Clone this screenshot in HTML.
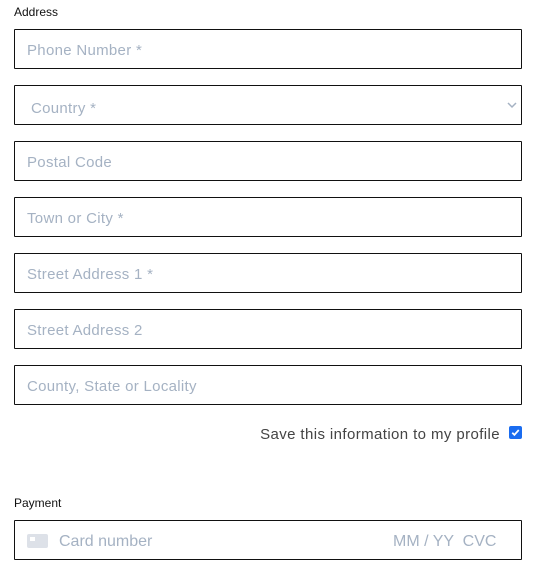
<!DOCTYPE html>
<html><head><style>
body{margin:0;background:#fff;font-family:"Liberation Sans",sans-serif;width:539px;height:567px;position:relative;overflow:hidden}
.l{position:absolute;left:14px;font-size:12px;color:#111}
.b{position:absolute;left:14px;width:506px;height:38px;border:1px solid #111;border-radius:1px;box-sizing:content-box}
.p{position:absolute;left:12px;top:12px;font-size:15px;color:#a5b2c3;letter-spacing:0.3px}
</style></head><body>
<div class="l" style="top:5px">Address</div>
<div class="b" style="top:29px"><span class="p">Phone Number *</span></div>
<div class="b" style="top:85px"><span class="p" style="left:16px;top:14px">Country *</span>
<svg style="position:absolute;right:4px;top:15px" width="10" height="8" viewBox="0 0 10 8"><path d="M1 2l4 4 4-4" fill="none" stroke="#a5b2c3" stroke-width="1.5"/></svg></div>
<div class="b" style="top:141px"><span class="p">Postal Code</span></div>
<div class="b" style="top:197px"><span class="p">Town or City *</span></div>
<div class="b" style="top:253px"><span class="p">Street Address 1 *</span></div>
<div class="b" style="top:309px"><span class="p">Street Address 2</span></div>
<div class="b" style="top:365px"><span class="p">County, State or Locality</span></div>
<div style="position:absolute;right:39px;top:426px;font-size:15px;color:#444;letter-spacing:0.4px">Save this information to my profile</div>
<div style="position:absolute;left:509px;top:426px;width:13px;height:13px;background:#1a6cf0;border-radius:2px"><svg width="13" height="13" viewBox="0 0 12 12"><path d="M3 6.2l2 2 4-4.5" fill="none" stroke="#fff" stroke-width="1.6"/></svg></div>
<div class="l" style="top:496px">Payment</div>
<div class="b" style="top:520px">
<div style="position:absolute;left:12px;top:13px;width:21px;height:14px;background:#dde1e8;border-radius:2px"><div style="position:absolute;left:3px;top:3px;width:5px;height:4px;background:#fff"></div></div>
<span class="p" style="left:44px;top:12px;font-size:16px;letter-spacing:0">Card number</span>
<span class="p" style="left:378px;top:12px;font-size:16px;letter-spacing:0">MM / YY &nbsp;CVC</span>
</div>
</body></html>
